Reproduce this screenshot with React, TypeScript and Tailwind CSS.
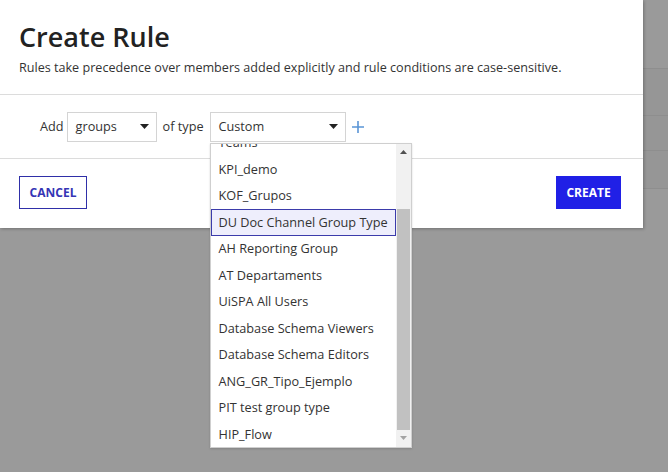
import { useState } from 'react'

const options = [
  'Teams',
  'KPI_demo',
  'KOF_Grupos',
  'DU Doc Channel Group Type',
  'AH Reporting Group',
  'AT Departaments',
  'UiSPA All Users',
  'Database Schema Viewers',
  'Database Schema Editors',
  'ANG_GR_Tipo_Ejemplo',
  'PIT test group type',
  'HIP_Flow',
]

const Caret = () => (
  <svg width="9" height="5" viewBox="0 0 9 5" className="shrink-0">
    <path d="M0 0h9L4.5 5z" fill="#222" />
  </svg>
)

// Fake select box
const SelectBox = ({ value, width }: { value: string; width: string }) => (
  <div
    className={`${width} h-[30px] flex items-center justify-between pl-[8px] pr-[7px] bg-white border border-[#d4d4d4] text-[12.7px] text-[#333]`}
  >
    <span>{value}</span>
    <Caret />
  </div>
)

// Dropdown list of group types (scrolled down a bit)
const TypeList = ({ selected }: { selected: string }) => (
  <div className="absolute left-0 top-[31px] w-[202px] h-[305px] bg-white border border-[#cfcfcf] flex shadow-[0_1px_2px_rgba(0,0,0,0.15)] z-10">
    <div className="flex-1 overflow-hidden">
      <div className="-mt-[14px]">
        {options.map(o => (
          <div
            key={o}
            className={`h-[26.5px] flex items-center pl-[7px] text-[12.7px] text-[#333] whitespace-nowrap border ${
              o === selected ? 'bg-[#eeeefc] border-[#3b3bab]' : 'border-transparent'
            }`}
          >
            {o}
          </div>
        ))}
      </div>
    </div>
    <div className="w-[15px] bg-[#f1f1f1] flex flex-col items-center">
      <div className="h-[17px] flex items-center justify-center">
        <svg width="7" height="4" viewBox="0 0 7 4">
          <path d="M0 4h7L3.5 0z" fill="#505050" />
        </svg>
      </div>
      <div className="mt-[48px] w-[13px] h-[221px] bg-[#c1c1c1]" />
      <div className="flex-1 flex items-center justify-center">
        <svg width="7" height="4" viewBox="0 0 7 4">
          <path d="M0 0h7L3.5 4z" fill="#a3a3a3" />
        </svg>
      </div>
    </div>
  </div>
)

export default function App() {
  const [selected] = useState('DU Doc Channel Group Type')

  return (
    <div
      className="relative w-[668px] h-[472px] overflow-hidden bg-[#9a9a9a]"
      style={{ fontFamily: '"Open Sans", "Liberation Sans", sans-serif' }}
    >
      {/* page behind the overlay */}
      <div className="flex flex-col">
        <div className="h-[69px] border-b border-[#8e8e8e]" />
        <div className="h-[47px] border-b border-[#8e8e8e] bg-[#969696]" />
        <div className="h-[35px] border-b border-[#8e8e8e] bg-[#969696]" />
        <div className="h-[38px] border-b border-[#8e8e8e] bg-[#969696]" />
      </div>

      {/* modal */}
      <div className="absolute left-0 top-0 w-[643px] h-[228px] bg-white shadow-[1px_1px_3px_rgba(0,0,0,0.25)] flex flex-col">
        <div className="h-[95px] border-b border-[#dcdcdc] px-[19px] pt-[17px]">
          <h1 className="text-[27px] leading-[40px] font-semibold text-[#222]">Create Rule</h1>
          <p className="mt-[2px] text-[12.6px] leading-[18px] text-[#333]">
            Rules take precedence over members added explicitly and rule conditions are case-sensitive.
          </p>
        </div>

        <div className="h-[64px] border-b border-[#dcdcdc] flex items-center pl-[40px] text-[12.7px] text-[#333]">
          <span className="mr-[3px]">Add</span>
          <SelectBox value="groups" width="w-[90px]" />
          <span className="ml-[6px] mr-[6px]">of type</span>
          <div className="relative">
            <SelectBox value="Custom" width="w-[136px]" />
            <TypeList selected={selected} />
          </div>
          <svg width="12" height="12" viewBox="0 0 12 12" className="ml-[6px]">
            <path d="M6 0v12M0 6h12" stroke="#5a95d6" strokeWidth="1.6" />
          </svg>
        </div>

        <div className="flex-1 flex items-start justify-between px-[19px] pt-[17px] pr-[22px]">
          <button className="h-[33px] w-[68px] border border-[#2f2fa8] text-[12px] font-bold text-[#3535b5]">
            CANCEL
          </button>
          <button className="h-[33px] w-[65px] bg-[#2020e6] text-[12px] font-bold text-white">CREATE</button>
        </div>
      </div>
    </div>
  )
}
